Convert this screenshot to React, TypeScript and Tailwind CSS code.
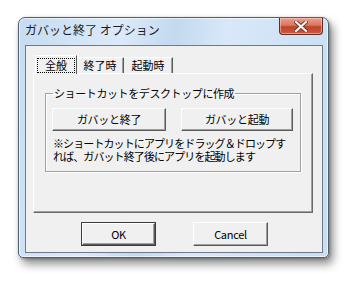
import React from "react";

const jp = { fontFamily: '"Noto Sans CJK JP", "Noto Sans", sans-serif' };

function ClassicButton({
  label,
  width,
  isDefault = false,
}: {
  label: string;
  width: string;
  isDefault?: boolean;
}) {
  return (
    <button
      className={`${width} ${
        isDefault ? "border border-[#3c3c3c]" : ""
      } flex h-full items-stretch bg-[#f0f0f0] p-0`}
    >
      <span className="flex flex-1 items-center justify-center border border-t-white border-l-white border-r-[#5a5a5a] border-b-[#5a5a5a] text-[11px] leading-none tracking-[-0.3px] text-black shadow-[inset_-1px_-1px_0_#a0a0a0]">
        {label}
      </span>
    </button>
  );
}

export default function App() {
  return (
    <div
      className="h-[281px] w-[351px] overflow-hidden bg-white pl-[18px] pt-[17px]"
      style={jp}
    >
      {/* Window frame */}
      <div className="flex h-[241px] w-[311px] flex-col rounded-t-[7px] rounded-b-[5px] border border-[#50606f] bg-[linear-gradient(100deg,#c6dcf1_0%,#dbeafa_30%,#c3d9ef_45%,#d8e8f8_60%,#cfe2f5_80%,#c9def3_100%)] shadow-[4px_6px_10px_rgba(0,0,0,0.45),1px_1px_3px_rgba(0,0,0,0.3),inset_0_0_0_1px_rgba(255,255,255,0.6)]">
        {/* Title bar */}
        <div className="flex h-[27px] items-start justify-between">
          <div className="pl-[6px] pt-[5px] text-[12px] leading-[14px] text-[#1c1c1c]">
            ガバッと終了 オプション
          </div>
          <div className="mr-[5px] flex h-[17px] w-[44px] items-center justify-center rounded-b-[4px] border border-t-0 border-[#6a2a20] bg-[linear-gradient(180deg,#e8a08e_0%,#d9775e_45%,#c0432a_55%,#c85a3e_100%)] shadow-[inset_0_0_0_1px_rgba(255,220,210,0.5)]">
            <svg width="14" height="11" viewBox="0 0 14 11">
              <path
                d="M2 1 L12 10 M12 1 L2 10"
                stroke="#6a3a30"
                strokeWidth="4"
                strokeLinecap="square"
              />
              <path
                d="M2 1 L12 10 M12 1 L2 10"
                stroke="#f4f4f4"
                strokeWidth="2.2"
                strokeLinecap="square"
              />
            </svg>
          </div>
        </div>

        {/* Client area */}
        <div className="mx-[6px] h-[208px] w-[298px] border border-[#6f7a86] bg-[#f0f0f0] pl-[7px] pt-[9px]">
          {/* Tabs */}
          <div className="relative z-10 flex h-[18px] items-end pl-[2px] text-[11px] leading-none text-black">
            <div className="-mb-px flex h-[19px] w-[42px] items-center justify-center border-l border-t border-r border-l-white border-t-white border-r-[#5a5a5a] bg-[#f0f0f0]">
              <span className="flex h-[15px] w-[38px] items-center justify-center border border-dotted border-black">全般</span>
            </div>
            <div className="flex h-[16px] w-[47px] items-center justify-center border-t border-r border-t-white border-r-[#5a5a5a] shadow-[inset_-1px_0_0_#a0a0a0]">
              終了時
            </div>
            <div className="flex h-[16px] w-[49px] items-center justify-center border-t border-r border-t-white border-r-[#5a5a5a] shadow-[inset_-1px_0_0_#a0a0a0]">
              起動時
            </div>
          </div>

          {/* Tab panel */}
          <div className="h-[140px] w-[280px] border border-t-white border-l-white border-r-[#696969] border-b-[#696969] shadow-[inset_-1px_-1px_0_#a0a0a0] pl-[11px] pt-[12px]">
            <fieldset className="h-[86px] w-[256px] border border-[#a0a0a0] px-[6px] shadow-[inset_1px_1px_0_#ffffff,1px_1px_0_#ffffff]">
              <legend className="ml-[1px] px-px text-[11px] leading-[14px] tracking-[-0.4px] text-black">
                ショートカットをデスクトップに作成
              </legend>
              <div className="mt-[8px] flex h-[23px] gap-[15px]">
                <ClassicButton label="ガバッと終了" width="w-[114px]" />
                <ClassicButton label="ガバッと起動" width="w-[112px]" />
              </div>
              <div className="mt-[5px] flex flex-col whitespace-nowrap pl-px text-[11px] leading-[14px] tracking-[-0.9px] text-black">
                <span>※ショートカットにアプリをドラッグ＆ドロップす</span>
                <span className="-mt-[1px]">れば、ガバット終了後にアプリを起動します</span>
              </div>
            </fieldset>
          </div>

          {/* Dialog buttons */}
          <div className="mt-[9px] flex h-[24px] gap-[37px] pl-[48px]">
            <ClassicButton label="OK" width="w-[75px]" isDefault />
            <ClassicButton label="Cancel" width="w-[75px]" />
          </div>
        </div>
      </div>
    </div>
  );
}
